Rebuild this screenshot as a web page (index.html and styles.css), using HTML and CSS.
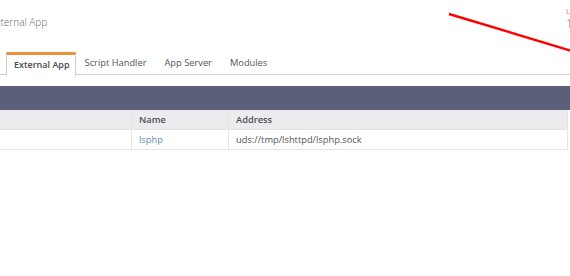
FILE: index.html
```html
<!DOCTYPE html>
<html lang="en">
<head>
<meta charset="UTF-8">
<meta name="viewport" content="width=device-width, initial-scale=1.0">
<title>External App</title>
<link rel="stylesheet" href="styles.css">
</head>
<body>

<div class="page">
  <div class="topbar">
    <h2 class="title">External App</h2>
    <div class="status">
      <span class="status-label">LSWS</span>
      <span class="status-value">1.7</span>
    </div>
  </div>

  <ul class="tabs">
    <li class="tab active">External App</li>
    <li class="tab">Script Handler</li>
    <li class="tab">App Server</li>
    <li class="tab">Modules</li>
  </ul>

  <div class="panel">
    <div class="panel-head"></div>
    <table>
      <thead>
        <tr>
          <th class="col-action"></th>
          <th class="col-name">Name</th>
          <th>Address</th>
        </tr>
      </thead>
      <tbody>
        <tr>
          <td></td>
          <td><a href="#" class="link">lsphp</a></td>
          <td>uds://tmp/lshttpd/lsphp.sock</td>
        </tr>
      </tbody>
    </table>
  </div>
</div>

<!-- annotation arrow drawn over the page -->
<svg class="annotation" width="570" height="276" viewBox="0 0 570 276">
  <line x1="449" y1="14" x2="572" y2="51" stroke="#ff0000" stroke-width="2.4"/>
</svg>

</body>
</html>
```

FILE: styles.css
```css
/* General Styles */
body {
  font-family: "Open Sans", Arial, sans-serif;
  font-size: 9.3px;
  color: #555;
  margin: 0;
  padding: 0;
  background-color: #fff;
  overflow: hidden;
}

.page {
  width: 570px;
}

/* Top bar */
.topbar {
  display: flex;
  justify-content: space-between;
  height: 52px;
}

.title {
  margin: 15px 0 0 -10px;
  font-size: 10px;
  font-weight: 300;
  color: #666;
}

.status {
  display: flex;
  flex-direction: column;
  margin: 5px -30px 0 0;
  width: 34px;
  line-height: 11px;
}

.status-label {
  color: #e0923e;
  font-size: 8px;
}

.status-value {
  color: #999;
  font-size: 12px;
  margin-top: 2px;
}

/* Tab Styles */
.tabs {
  display: flex;
  list-style: none;
  margin: 0;
  padding: 0 0 0 6px;
  border-bottom: 1px solid #cfcfcf;
  height: 22px;
}

.tab {
  padding: 0 8px;
  line-height: 22px;
  color: #555;
  border: 1px solid transparent;
  border-top-width: 0;
}

.tab.active {
  font-size: 9px;
  font-weight: 600;
  color: #4a4a4a;
  background-color: #fff;
  border-color: #cfcfcf;
  border-top: 3px solid #e8923a;
  border-bottom-color: #fff;
  line-height: 20px;
  height: 20px;
  margin-bottom: -1px;
  padding: 0 5px 0 7px;
}

/* Panel Styles */
.panel {
  margin-top: 11px;
}

.panel-head {
  height: 24px;
  background-color: #5c5f79;
}

/* Table Styles */
table {
  width: 568px;
  border-collapse: collapse;
}

table th, table td {
  height: 19px;
  padding: 0 7px;
  text-align: left;
  border: 1px solid #e4e4e4;
  border-top: none;
}

table th:first-child, table td:first-child {
  border-left: none;
}

table th {
  background-color: #ececee;
  color: #505050;
  font-weight: 600;
}

.col-action {
  width: 117px;
}

.col-name {
  width: 82px;
}

.link {
  color: #6d8bb0;
  text-decoration: none;
}

/* Annotation overlay */
.annotation {
  position: absolute;
  left: 0;
  top: 0;
  pointer-events: none;
}
```
